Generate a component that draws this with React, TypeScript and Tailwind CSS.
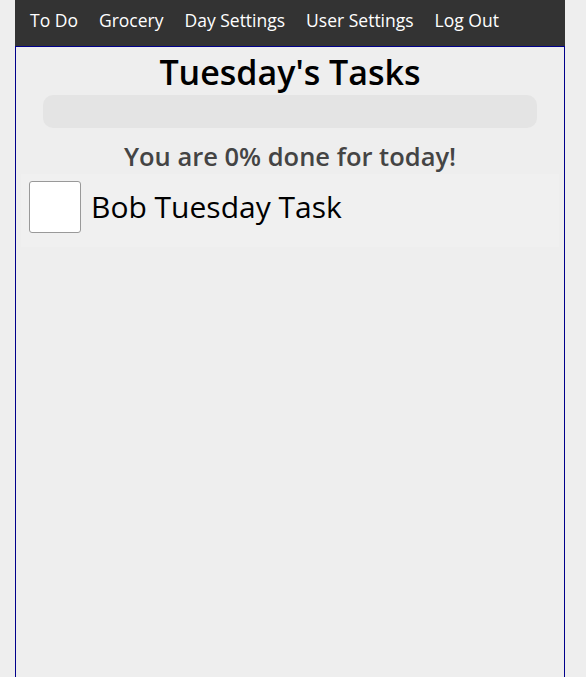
import React from 'react';

const navItems = ['To Do', 'Grocery', 'Day Settings', 'User Settings', 'Log Out'];

export default function App() {
  return (
    <div className="min-h-[677px] bg-[#eeeeee] font-['Open_Sans',sans-serif]">
      <div className="ml-[15px] w-[550px]">
        <nav className="flex h-[46px] items-center gap-[21px] bg-[#333333] pl-[15px] pb-[5px]">
          {navItems.map((item) => (
            <a key={item} href="#" className="text-[17.5px] text-white">
              {item}
            </a>
          ))}
        </nav>
        <main className="min-h-[631px] border border-b-0 border-[#00008b] bg-[#eeeeee] px-[13px]">
          <h1 className="mt-[2px] text-center text-[34px] font-semibold leading-[46px] text-black">
            Tuesday's Tasks
          </h1>
          <div className="mx-[14px] h-[33px] rounded-[10px] bg-[#e4e4e4]" />
          <p className="mt-[10px] text-center text-[25.5px] font-semibold leading-[36px] text-[#444444]">
            You are 0% done for today!
          </p>
          <div className="-mx-[8px] flex h-[73px] items-start gap-[10px] bg-[#f0f0f0] px-[8px] pt-[7px]">
            <input
              type="checkbox"
              className="h-[52px] w-[52px] appearance-none rounded-[3px] border border-[#999999] bg-white"
            />
            <span className="text-[30px] leading-[52px] text-black">Bob Tuesday Task</span>
          </div>
        </main>
      </div>
    </div>
  );
}
